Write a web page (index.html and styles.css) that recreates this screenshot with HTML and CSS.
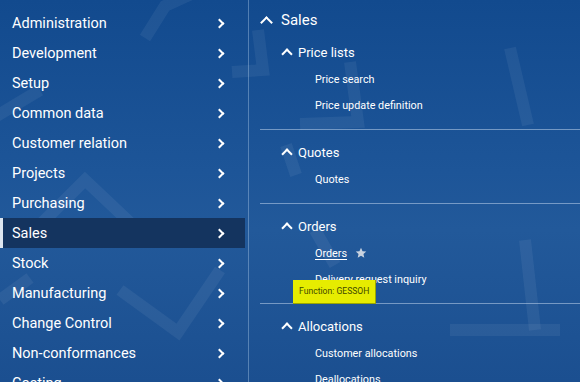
FILE: index.html
```html
<!DOCTYPE html>
<html>
<head>
<meta charset="utf-8">
<link rel="stylesheet" href="styles.css">
</head>
<body>
<div class="app">
  <svg class="watermark" width="580" height="382" viewBox="0 0 580 382">
    <g fill="none" stroke="#ffffff" stroke-opacity="0.06" stroke-width="12" stroke-linejoin="miter">
      <polyline points="145,38 165,6 200,-10"/>
      <polyline points="-10,120 40,90"/>
      <polyline points="40,225 85,180 140,232"/>
      <polyline points="120,290 178,332 220,270"/>
      <polyline points="0,300 30,278"/>
      <polyline points="258,30 263,70 232,72"/>
      <polyline points="350,62 358,122 300,124"/>
      <polyline points="510,48 528,125"/>
      <polyline points="286,145 296,175"/>
      <polyline points="315,230 335,265"/>
      <polyline points="525,240 535,330"/>
      <polyline points="450,330 560,330"/>
    </g>
  </svg>
  <nav class="nav">
    <ul class="nav-list">
      <li class="nav-item"><span>Administration</span><i class="chev-r"></i></li>
      <li class="nav-item"><span>Development</span><i class="chev-r"></i></li>
      <li class="nav-item"><span>Setup</span><i class="chev-r"></i></li>
      <li class="nav-item"><span>Common data</span><i class="chev-r"></i></li>
      <li class="nav-item"><span>Customer relation</span><i class="chev-r"></i></li>
      <li class="nav-item"><span>Projects</span><i class="chev-r"></i></li>
      <li class="nav-item"><span>Purchasing</span><i class="chev-r"></i></li>
      <li class="nav-item active"><span>Sales</span><i class="chev-r"></i></li>
      <li class="nav-item"><span>Stock</span><i class="chev-r"></i></li>
      <li class="nav-item"><span>Manufacturing</span><i class="chev-r"></i></li>
      <li class="nav-item"><span>Change Control</span><i class="chev-r"></i></li>
      <li class="nav-item"><span>Non-conformances</span><i class="chev-r"></i></li>
      <li class="nav-item"><span>Costing</span><i class="chev-r"></i></li>
    </ul>
  </nav>
  <main class="panel">
    <h1 class="panel-title"><i class="chev-u big"></i>Sales</h1>
    <section class="group first">
      <h2 class="group-title"><i class="chev-u"></i>Price lists</h2>
      <ul class="links">
        <li>Price search</li>
        <li>Price update definition</li>
      </ul>
    </section>
    <section class="group">
      <h2 class="group-title"><i class="chev-u"></i>Quotes</h2>
      <ul class="links">
        <li>Quotes</li>
      </ul>
    </section>
    <section class="group">
      <h2 class="group-title"><i class="chev-u"></i>Orders</h2>
      <ul class="links">
        <li class="hover"><span class="u">Orders</span>
          <svg class="star" width="12" height="12" viewBox="0 0 24 24"><path d="M12 1.5l3.1 6.9 7.4.7-5.6 5 1.7 7.4L12 17.6l-6.6 3.9 1.7-7.4-5.6-5 7.4-.7z" fill="#c9d3e0"/></svg>
        </li>
        <li>Delivery request inquiry</li>
      </ul>
      <div class="tooltip">Function: GESSOH</div>
    </section>
    <section class="group">
      <h2 class="group-title"><i class="chev-u"></i>Allocations</h2>
      <ul class="links">
        <li>Customer allocations</li>
        <li>Deallocations</li>
      </ul>
    </section>
  </main>
</div>
</body>
</html>
```

FILE: styles.css
```css
* { box-sizing: border-box; }
html, body { margin: 0; padding: 0; }
body {
  width: 580px;
  height: 382px;
  overflow: hidden;
  font-family: Roboto, "Liberation Sans", Arial, sans-serif;
  color: #ffffff;
  background: linear-gradient(180deg, #124a8e 0%, #1d5598 45%, #22599a 60%, #1b4f90 100%);
}
.app {
  position: relative;
  display: flex;
  height: 382px;
  overflow: hidden;
}
.watermark {
  position: absolute;
  left: 0;
  top: 0;
  pointer-events: none;
}
.nav {
  position: relative;
  width: 249px;
  flex: none;
  padding-top: 8px;
  border-right: 1px solid rgba(160, 190, 225, 0.45);
}
.nav-list {
  list-style: none;
  margin: 0;
  padding: 0;
  width: 245px;
}
.nav-item {
  height: 30px;
  display: flex;
  align-items: center;
  justify-content: space-between;
  padding: 1px 22px 0 12px;
  font-size: 14.5px;
}
.nav-item.active {
  background: #14345f;
  box-shadow: inset 3px 0 0 #dde5ef;
}
.chev-r {
  display: block;
  width: 7px;
  height: 7px;
  border-top: 2px solid #ffffff;
  border-right: 2px solid #ffffff;
  transform: rotate(45deg);
  margin-right: 0;
}
.panel {
  position: relative;
  flex: 1;
  padding: 10px 0 0 11px;
}
.panel-title {
  margin: 0;
  height: 20px;
  display: flex;
  align-items: center;
  font-size: 15px;
  font-weight: 400;
}
.chev-u {
  display: block;
  width: 9px;
  height: 9px;
  border-top: 2px solid #ffffff;
  border-left: 2px solid #ffffff;
  transform: rotate(45deg);
}
.chev-u.big {
  margin: 5px 10px 0 2px;
}
.group {
  position: relative;
  border-top: 1px solid rgba(190, 210, 235, 0.55);
  padding: 12px 0 11px 22px;
}
.group.first {
  border-top: 0;
  padding-top: 12px;
}
.group-title {
  margin: 0;
  height: 20px;
  display: flex;
  align-items: center;
  font-size: 13px;
  font-weight: 400;
}
.group-title .chev-u {
  width: 8px;
  height: 8px;
  margin: 4px 7px 0 1px;
}
.links {
  list-style: none;
  margin: 4px 0 0 0;
  padding: 0 0 0 33px;
}
.links li {
  height: 26px;
  display: flex;
  align-items: center;
  font-size: 10.8px;
}
.links .u {
  text-decoration: underline;
  text-underline-offset: 2px;
}
.star {
  margin-left: 8px;
}
.tooltip {
  position: absolute;
  left: 33px;
  top: 76px;
  z-index: 3;
  width: 83px;
  height: 24px;
  line-height: 23px;
  padding-left: 6px;
  background: #e6ec00;
  color: #3f4a00;
  font-size: 8.6px;
  border-right: 1px solid #9aa500;
  border-bottom: 1px solid #9aa500;
  white-space: nowrap;
}
```
